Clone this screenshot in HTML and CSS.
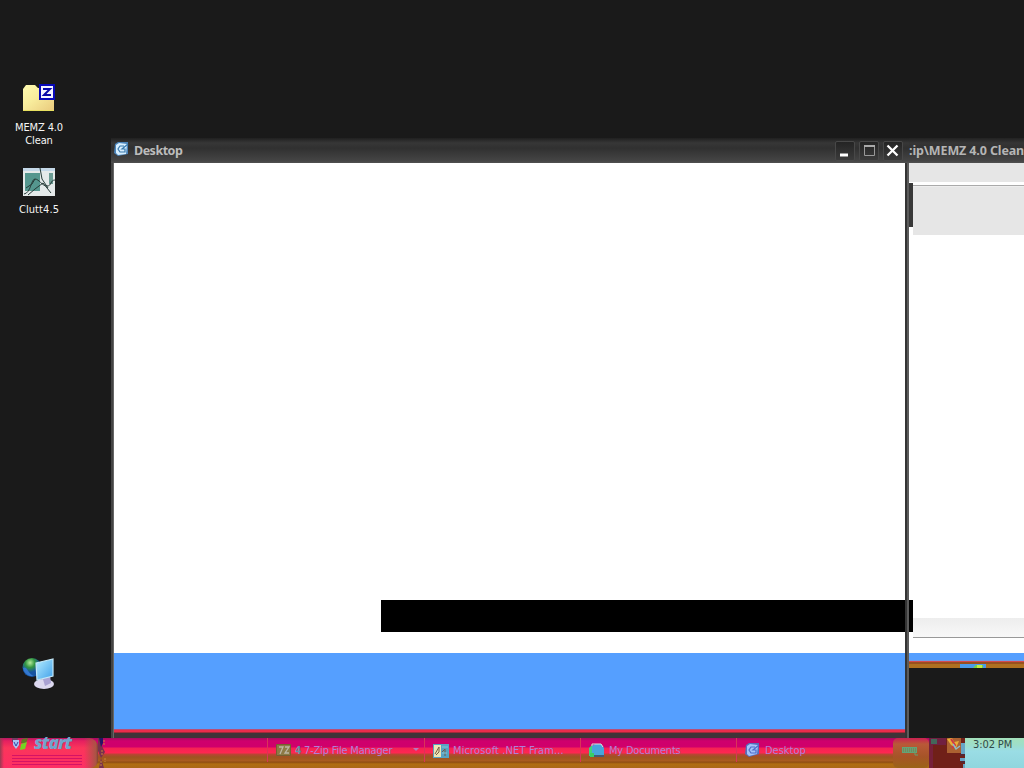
FILE: index.html
```html
<!DOCTYPE html>
<html lang="en">
<head>
<meta charset="utf-8">
<title>Desktop</title>
<link rel="stylesheet" href="styles.css">
</head>
<body>
<main class="desktop">
  <div class="shortcut memz">
    <svg width="32" height="32" viewBox="0 0 32 32"><defs><linearGradient id="fold" x2="1" y2="1"><stop offset="0" stop-color="#fffbb0"/><stop offset=".45" stop-color="#f8ec9c"/><stop offset="1" stop-color="#e9c97c"/></linearGradient></defs><path d="M0 6 3 2H12L15 5H31V28H0Z" fill="url(#fold)"/><path d="M0 27.5H31" stroke="#e8e060"/><path d="M17 2H31V16H17Z" fill="#f4f4ff" stroke="#0808b8" stroke-width="2"/><path d="M20 6H27L21 12H28" fill="none" stroke="#0808a8" stroke-width="2"/></svg>
    <span class="wide">MEMZ 4.0</span><span>Clean</span>
  </div>
  <div class="shortcut clutt">
    <svg width="32" height="28" viewBox="0 0 32 28"><path d="M0 0H32V28H0Z" fill="#e5eaea"/><path d="M0 0H32V3H0Z" fill="#c4d8e8"/><path d="M2 5H17V23H2Z" fill="#55978f"/><path d="M26 5H30V16H26Z" fill="#6b9c94"/><path d="M1 26C8 25 8 11 12 11S19 18 24 18 27 12 32 12M5 27 12 21 20 15 28 25M17 0 19 11 25 20M3 20 9 16 12 11" stroke="#263b38" fill="none"/></svg>
    <span>Clutt4.5</span>
  </div>
  <div class="shortcut network">
    <svg width="34" height="34" viewBox="0 0 34 34"><defs><radialGradient id="earth" cx=".4" cy=".25"><stop offset="0" stop-color="#b4eb9a"/><stop offset=".5" stop-color="#349742"/><stop offset="1" stop-color="#1654a0"/></radialGradient><linearGradient id="screen" x2="1" y2="1"><stop offset="0" stop-color="#b5edff"/><stop offset="1" stop-color="#3e9fea"/></linearGradient></defs><circle cx="10" cy="11.5" r="9.5" fill="url(#earth)"/><path d="M1 12C5 9 6 18 12 20L8 20Q2 18 1 12" fill="#3478d0"/><ellipse cx="22" cy="28" rx="10" ry="5" fill="#dcd8ef"/><path d="M20 20 28 19 29 27 23 30Z" fill="#aaa2d3"/><path d="M14 7 31 3 31 20 15 24Z" fill="url(#screen)" stroke="#c4e8f8" stroke-width="1.2"/></svg>
  </div>

  <section class="archive">
    <header>:ip\MEMZ 4.0 Clean</header>
    <div class="menu"></div><div class="tools"></div><div class="files"></div><div class="status"></div><div class="foot"></div><div class="sky"></div>
    <div class="fragment"><svg width="26" height="6" viewBox="0 0 26 6"><path d="M0 0H26V6H0Z" fill="#4b9bea"/><path d="M11 6 16 1H23V6Z" fill="#76d443"/><path d="M17 1H22V5H17Z" fill="#c4eb45"/></svg></div>
  </section>

  <section class="window">
    <header>
      <svg width="16" height="16" viewBox="0 0 16 16"><path d="M1 3 4 1 14 1 14 13 4 15 0 12Z" fill="#4b83b8"/><path d="M2 4 5 2 13 3 12 13 4 14 2 12Z" fill="#d7efff"/><path d="M10 5H6L4 8 6 11H11V8H8L14 3" fill="none" stroke="#3878ac" stroke-width="1.2"/></svg>
      <h1>Desktop</h1>
      <div class="controls">
        <i><svg width="18" height="18"><path d="M4 13H12" stroke="#fff" stroke-width="3"/></svg></i>
        <i><svg width="18" height="18"><path d="M4.5 3.5H14.5V13.5H4.5Z" fill="none" stroke="#999"/><path d="M4 4H15" stroke="#aaa" stroke-width="2"/></svg></i>
        <i><svg width="18" height="18"><path d="M3.5 3.5 13.5 13.5M13.5 3.5 3.5 13.5" stroke="#fff" stroke-width="2.3"/></svg></i>
      </div>
    </header>
    <div class="client"><div class="blue"></div><div class="redline"></div></div>
  </section>
  <div class="black-strip"></div>
  <div class="edge-strip"></div>

  <footer class="taskbar">
    <div class="start">
      <svg width="17" height="13" viewBox="0 0 17 13"><path d="M1 0H7L6 4H1Z" fill="#763a62"/><path d="M2 2H8V7L5 11 2 7Z" fill="#a8c3f4"/><path d="M3 4 5 8 7 4" stroke="#3547a6" fill="none"/><path d="M11 1 17 0 15 5H10Z" fill="#657a24"/><path d="M10 6 16 4 14 11 9 12Z" fill="#74d521"/></svg>
      <b>start</b>
    </div>
    <div class="notch"><svg width="11" height="30" viewBox="0 0 11 30"><path d="M0 0H5L4 8 7 14 3 20 6 30H1L3 20 0 13Z" fill="#79304d"/><path d="M1 0H5V5L3 9Z" fill="#241467"/><path d="M6 2V8M4 12V17M7 20V24M3 23V29" stroke="#c78738" stroke-dasharray="2 1"/></svg></div>
    <div class="quick"></div>
    <div class="task zip"><svg width="16" height="14" viewBox="0 0 16 14"><path d="M.5 1.5H14.5V12.5H.5Z" fill="#8d7a46" stroke="#756030"/><path d="M3 4H7L4 11M9 4H13L9 10H13" fill="none" stroke="#bdb6a4" stroke-width="1.3"/></svg><b>4</b><span>7-Zip File Manager</span><svg class="arrow" width="6" height="4"><path d="M0 0H6L3 3Z" fill="#b477bf"/></svg></div>
    <div class="task net"><svg width="16" height="15" viewBox="0 0 16 15"><path d="M0 1H16V15H0Z" fill="#57a3c2"/><path d="M1 2H8V14H1Z" fill="#eee6b6"/><path d="M2 11 6 4V9L3 12M9 9 12 6V13" stroke="#765b45" fill="none"/><path d="M9 10H14M9 4H15" stroke="#83c5d6"/></svg><span>Microsoft .NET Fram...</span></div>
    <div class="task docs"><svg width="16" height="15" viewBox="0 0 16 15"><path d="M0 13V5L3 2V13Z" fill="#40d47b"/><path d="M3 3 6 1H12L15 5V14H3Z" fill="#48a5dc"/><path d="M3 3V1H12L14 4" stroke="#d3e9df" fill="none"/><path d="M3 12H15V14H3Z" fill="#465a72"/><path d="M1 10H5V14H1Z" fill="#37ce65"/></svg><span>My Documents</span></div>
    <div class="task desk"><svg width="16" height="16" viewBox="0 0 16 16"><path d="M1 3 4 1 14 1 14 12 4 15 0 12Z" fill="#536fba"/><path d="M2 4 5 2 13 3 12 12 4 14 2 12Z" fill="#a5c3fa"/><path d="M10 5H6L4 8 6 11H11V8H8L14 3" fill="none" stroke="#506cc9" stroke-width="1.2"/></svg><span>Desktop</span></div>
    <div class="language"><svg width="17" height="10" viewBox="0 0 17 10"><path d="M0 1H15V7H0Z" fill="#63a477"/><path d="M1 3H14M1 5H14" stroke="#896d40" stroke-dasharray="1 1"/><path d="M13 6V9H16" fill="none" stroke="#64a26f"/></svg></div>
    <div class="tray"><svg width="36" height="30" viewBox="0 0 36 30"><path d="M0 0H17V7H0Z" fill="#702041"/><path d="M2 1H8V6H2Z" fill="#44675a"/><path d="M0 7H4V30H0Z" fill="#762039"/><path d="M18 0H32V15H18Z" fill="#ac6131"/><path d="M18 1 23 0 25 4 30 3 27 10 22 7Z" fill="#e8ae38"/><path d="M22 1 26 7 23 10" stroke="#cf3844" stroke-width="2" fill="none"/><path d="M24 6 27 11 31 8" stroke="#8ebbc8" fill="none" stroke-width="1.5"/><path d="M32 5H36V16H32ZM31 20H36V23H31ZM34 26H36V30H34Z" fill="#68a5c5"/><path d="M31 17H36M32 24H36" stroke="#382c4d"/></svg></div>
    <time>3:02 PM</time>
  </footer>
</main>
</body>
</html>
```
FILE: styles.css
```css
* { box-sizing: border-box; }
body { margin: 0; }
svg { display: block; flex-shrink: 0; }
.desktop { position: relative; width: 1024px; height: 768px; overflow: hidden; background: #1a1a1a; font: 11px "DejaVu Sans Condensed", "DejaVu Sans", sans-serif; font-stretch: condensed; }
.shortcut { position: absolute; left: 4px; width: 70px; display: flex; flex-direction: column; align-items: center; color: #f5f5f5; line-height: 13px; letter-spacing: -.12px; }
.memz { top: 83px; }
.memz svg { margin-bottom: 6px; }
.clutt { top: 168px; }
.clutt svg { margin-bottom: 7px; }
.clutt span { letter-spacing: .1px; }
.network { top: 656px; }
.window { position: absolute; left: 111px; top: 138px; width: 798px; height: 600px; padding: 0 4px 5px 3px; background: linear-gradient(90deg, #444 0 2px, #666 2px 3px, transparent 3px 794px, #343434 794px 796px, #5b5b5b 796px), #403338; }
.window > header { display: flex; align-items: center; height: 25px; margin: 0 -4px 0 -3px; padding: 0 6px 0 3px; background: linear-gradient(#202020, #373737 5px, #303030 10px, #454545 23px, #505050); }
.window header > svg { margin-top: -3px; }
h1 { margin: 0 auto 0 4px; color: #bcbcbc; font: bold 12.5px "Noto Sans", sans-serif; font-stretch: normal; letter-spacing: -.5px; }
.controls { display: flex; gap: 4px; }
.controls i { width: 20px; height: 20px; border: 1px solid #484848; border-radius: 2px; background: linear-gradient(#242424, #3b3b3b); }
.client { display: flex; flex-direction: column; height: 570px; background: #fff; }
.blue { height: 76px; margin-top: auto; background: #559fff; }
.redline { height: 4px; background: linear-gradient(#b94f78 1px, #eb2c4b 1px 3px, #a32a38 3px); }
.archive { position: absolute; left: 909px; top: 138px; width: 115px; height: 530px; overflow: hidden; background: #fff; }
.archive header { height: 25px; padding-left: 0; background: linear-gradient(#222, #353535 5px, #303030 10px, #454545 23px, #505050); color: #b5b5b5; font: bold 12.5px/25px "Noto Sans", sans-serif; font-stretch: normal; letter-spacing: -.12px; white-space: nowrap; }
.menu { height: 20px; background: #e6e6e6; border-bottom: 1px solid #fff; }
.tools { height: 52px; margin-left: 1px; border-top: 1px solid #fff; background: linear-gradient(#fff 1px, #aaa 1px 2px, #eee 2px 3px, #e6e6e6 3px); border-left: 3px solid #fff; }
.files { height: 383px; }
.status { height: 20px; margin-left: 4px; border-bottom: 1px solid #999; background: linear-gradient(#ededed, #f8f8f8); }
.foot { height: 15px; }
.sky { height: 11px; background: linear-gradient(#559fff 7px, #719be3 7px 8px, #d44b50 8px 9px, #98501e 9px); }
.fragment { display: flex; height: 6px; padding-left: 51px; background: #ae7020; }
.black-strip { position: absolute; left: 381px; top: 600px; width: 532px; height: 32px; background: linear-gradient(90deg, #000 524px, #343434 524px 526px, #5b5b5b 526px 528px, #000 528px); }
.edge-strip { position: absolute; left: 909px; top: 183px; width: 4px; height: 44px; background: #393939; }
.taskbar { position: absolute; top: 738px; left: 0; display: flex; width: 1024px; height: 30px; color: #b07dd8; background: linear-gradient(#a70c5d, #cf006d 3px, #cf006b 9px, #f52254 10px, #ff2751 15px, #bd4337 16px, #9d5421 19px, #aa5d20 23px, #8d4b14 24px, #b06d12 26px, #aa6817); }
.start { display: flex; width: 98px; padding-left: 11px; background: repeating-linear-gradient(#d51365 0 1px, transparent 1px 3px) 12px 17px / 70px 10px no-repeat, linear-gradient(90deg, #983b52, transparent 4px 84px, #a95444 96px, #804033), linear-gradient(#b61761, #e52060 3px, #fb355b 10px, #fe2e64); border-radius: 0 9px 8px 0; }
.start b { margin: -4px 0 0 6px; color: #72a4cc; font: italic 800 17px/17px "Open Sans", sans-serif; font-stretch: normal; letter-spacing: -.9px; }
.notch { width: 11px; }
.quick { width: 158px; }
.task { display: flex; align-items: center; width: 157px; height: 24px; padding-left: 8px; border-left: 1px solid #db3357; white-space: nowrap; letter-spacing: -.2px; }
.task span { margin-left: 4px; }
.zip b { margin-left: 3px; color: #6195aa; font-size: 10px; }
.zip span { margin-left: 3px; }
.zip .arrow { margin: 0 5px 0 auto; }
.task:not(.zip) { width: 156px; }
.net span { letter-spacing: .12px; }
.docs { padding-left: 8px; }
.desk { letter-spacing: 0; }
.language { width: 36px; margin-left: 1px; padding: 8px 0 0 9px; border-radius: 5px; background: linear-gradient(#ca2052, #b95938 6px, #a65427 19px, #9b6417); }
.tray { width: 36px; background: #702018; }
time { flex: 1; padding-left: 8px; background: linear-gradient(#a4e1bb, #9edeca 7px, #9adde5 13px, #91d6de); color: #304847; line-height: 13px; letter-spacing: -.1px; white-space: nowrap; }
```
